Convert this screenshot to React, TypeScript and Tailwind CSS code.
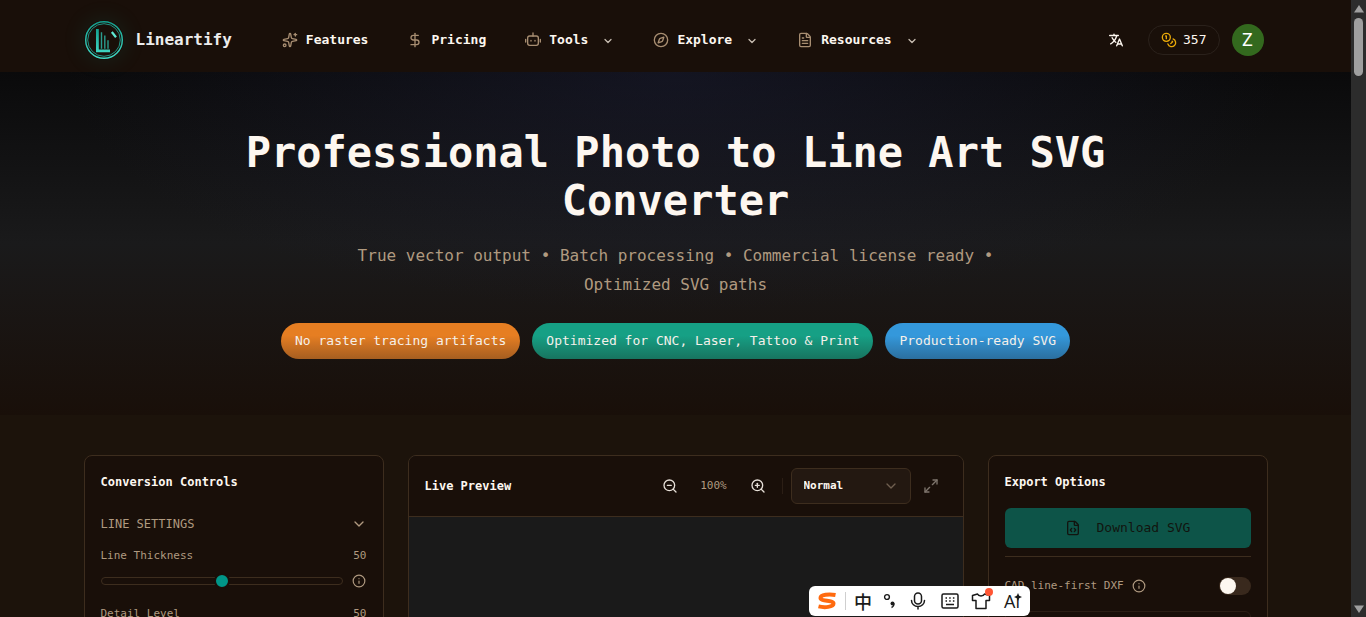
import type { ReactNode } from 'react';
import {
  ChevronDown,
  Coins,
  Compass,
  DollarSign,
  FileCode,
  FileText,
  Info,
  Maximize2,
  Sparkles,
  ZoomIn,
  ZoomOut,
} from 'lucide-react';
import { IoLanguage } from 'react-icons/io5';

function LogoMark() {
  return (
    <svg viewBox="0 0 40 40" className="size-10 rounded-full shadow-[0_0_24px_rgba(20,184,166,0.12)]" aria-hidden="true">
      <defs>
        <linearGradient id="logo" x1="0" y1="0" x2="0" y2="1">
          <stop offset="0" stopColor="#14a08f" />
          <stop offset="1" stopColor="#3fd6c2" />
        </linearGradient>
      </defs>
      <circle cx="20" cy="20" r="18.3" fill="none" stroke="url(#logo)" strokeWidth="1.5" />
      <circle cx="20" cy="20" r="16.3" fill="none" stroke="#1fa393" strokeWidth="0.9" />
      <path d="M12 9h2.8v20.400H26v2.800H12z" fill="url(#logo)" />
      <path d="M17.500 12.300v16.500M20.800 15.500v13.300M24 20.300v8.500" stroke="#2a9d8f" strokeWidth="1.400" />
      <path d="M27.800 12l4.200 5.300" stroke="#5eead4" strokeWidth="2.200" />
    </svg>
  );
}

function RobotIcon() {
  return (
    <svg viewBox="0 0 24 24" fill="none" stroke="currentColor" strokeWidth="2" strokeLinecap="round" strokeLinejoin="round" className="size-4" aria-hidden="true">
      <rect x="4" y="6" width="16" height="14" rx="3" />
      <path d="M12 6V1.500M1 11v4M23 11v4M9 12.500v1M15 12.500v1" />
    </svg>
  );
}

function NavItem({ icon, label, menu }: { icon: ReactNode; label: string; menu?: boolean }) {
  const content = (
    <>
      <span className="text-[#a88e72]">{icon}</span>
      {label}
      {menu && <ChevronDown className="mt-0.5 ml-1.5 size-3 text-[#c9beb2]" strokeWidth={2.5} />}
    </>
  );

  return menu ? (
    <button type="button" className="flex items-center gap-2">{content}</button>
  ) : (
    <a href="#" className="flex items-center gap-2">{content}</a>
  );
}

function Header() {
  return (
    <header className="bg-[#190f09]">
      <div className="mx-auto flex h-[72px] max-w-7xl items-center px-12 pt-2">
        <a href="#" className="flex items-center gap-3 text-base font-bold text-[#ececec]">
          <LogoMark />
          Lineartify
        </a>

        <nav className="ml-[50px] flex items-center gap-[39px] text-[13px] font-bold text-[#fdf7f0]">
          <NavItem icon={<Sparkles className="size-4" />} label="Features" />
          <NavItem icon={<DollarSign className="size-4" />} label="Pricing" />
          <NavItem icon={<RobotIcon />} label="Tools" menu />
          <NavItem icon={<Compass className="size-4" />} label="Explore" menu />
          <NavItem icon={<FileText className="size-4" />} label="Resources" menu />
        </nav>

        <div className="ml-auto flex items-center gap-3 pr-1 text-[#fdf7f0]">
          <button type="button" aria-label="Language" className="flex size-10 items-center justify-center">
            <IoLanguage className="size-4" />
          </button>
          <a href="#" className="flex h-[30px] items-center gap-1.5 rounded-full border border-[#2a211b] px-3 text-[13px]">
            <Coins className="size-4 text-[#eaa908]" />
            357
          </a>
          <button type="button" className="flex size-8 items-center justify-center rounded-full bg-[#33691e] font-[Roboto] text-lg text-white">
            Z
          </button>
        </div>
      </div>
    </header>
  );
}

function Hero() {
  return (
    <section className="bg-[radial-gradient(ellipse_45%_70%_at_50%_0%,rgba(34,36,66,0.4),transparent),linear-gradient(to_bottom,#0a0a0b,#1a1a1b_50%,#190f09)] px-12 pt-[57px] pb-14 text-center">
      <h1 className="mx-auto max-w-4xl text-[42px] leading-12 font-bold text-[#fdf7f0]">
        Professional Photo to Line Art SVG Converter
      </h1>
      <p className="mx-auto mt-4 max-w-2xl text-base leading-[29px] text-[#b09a80]">
        True vector output • Batch processing • Commercial license ready • Optimized SVG paths
      </p>
      <div className="mt-6 flex flex-wrap justify-center gap-3 text-[13px] leading-5 text-[#f5f0ea]">
        <span className="rounded-full bg-linear-to-b from-[#e67e22] from-35% to-[#a65e20] px-3.5 py-2">No raster tracing artifacts</span>
        <span className="rounded-full bg-linear-to-b from-[#16a085] from-35% to-[#17745f] px-3.5 py-2">Optimized for CNC, Laser, Tattoo &amp; Print</span>
        <span className="rounded-full bg-linear-to-b from-[#3498db] from-35% to-[#2b6f9f] px-3.5 py-2">Production-ready SVG</span>
      </div>
    </section>
  );
}

function SliderRow({ id, label }: { id: string; label: string }) {
  return (
    <div className="flex flex-col gap-2 text-[11px] leading-4">
      <div className="flex justify-between">
        <label htmlFor={id}>{label}</label>
        <span>50</span>
      </div>
      <div className="flex h-[18px] items-center gap-2">
        <input
          id={id}
          type="range"
          defaultValue={50}
          className="h-2 min-w-0 flex-1 appearance-none rounded-full border border-[#3d2d1e] bg-transparent [&::-webkit-slider-thumb]:size-4 [&::-webkit-slider-thumb]:appearance-none [&::-webkit-slider-thumb]:rounded-full [&::-webkit-slider-thumb]:border-2 [&::-webkit-slider-thumb]:border-[#190f09] [&::-webkit-slider-thumb]:bg-[#009688]"
        />
        <button type="button" aria-label={`About ${label}`} className="flex w-4 justify-center">
          <Info className="size-3.5" />
        </button>
      </div>
    </div>
  );
}

function Controls() {
  return (
    <section className="rounded-lg border border-[#3d2d1e] bg-[#190f09] p-4 text-[#b09a80]">
      <h2 className="text-xs leading-5 font-bold text-[#fdf7f0]">Conversion Controls</h2>
      <button type="button" className="mt-4 flex h-8 w-full items-center justify-between text-xs">
        LINE SETTINGS
        <ChevronDown className="size-4" />
      </button>
      <div className="mt-2 flex flex-col gap-4">
        <SliderRow id="thickness" label="Line Thickness" />
        <SliderRow id="detail" label="Detail Level" />
      </div>
    </section>
  );
}

function Preview() {
  return (
    <section className="overflow-hidden rounded-lg border border-[#3d2d1e] bg-[#1a1a1a]">
      <div className="flex items-center justify-between border-b border-[#3d2d1e] bg-[#190f09] px-4 py-3">
        <h2 className="text-xs font-bold text-[#fdf7f0]">Live Preview</h2>
        <div className="flex items-center gap-1 text-[11px] text-[#e6dfd7]">
          <button type="button" aria-label="Zoom out" className="flex size-8 items-center justify-center">
            <ZoomOut className="size-4" />
          </button>
          <span className="w-12 text-center text-[#b09a80]">100%</span>
          <button type="button" aria-label="Zoom in" className="flex size-8 items-center justify-center">
            <ZoomIn className="size-4" />
          </button>
          <span className="mx-1 h-4 w-px bg-[#2b1e15]" />
          <div className="relative">
            <select aria-label="Preview mode" className="h-9 w-[120px] appearance-none rounded-md border border-[#3d2d1e] bg-[#231811] px-3 font-bold text-[#fdf7f0]">
              <option>Normal</option>
            </select>
            <ChevronDown className="pointer-events-none absolute top-2.5 right-3 size-4 text-[#6f5f4f]" />
          </div>
          <button type="button" aria-label="Full screen" className="flex size-8 items-center justify-center text-[#7d746c]">
            <Maximize2 className="size-4" />
          </button>
        </div>
      </div>
      <div className="min-h-96" />
    </section>
  );
}

function ExportOptions() {
  return (
    <section className="rounded-lg border border-[#3d2d1e] bg-[#190f09] p-4 text-[#b09a80]">
      <h2 className="text-xs leading-5 font-bold text-[#fdf7f0]">Export Options</h2>
      <button type="button" className="mt-4 flex h-10 w-full items-center justify-center gap-4 rounded-md bg-[#0d5448] text-[13px] text-[#12140f]">
        <FileCode className="size-4" />
        Download SVG
      </button>
      <div className="mt-2 flex items-center justify-between border-t border-[#3d2d1e] pt-5 pb-4 text-[11px]">
        <div className="flex items-center gap-2">
          <label htmlFor="dxf">CAD line-first DXF</label>
          <Info className="size-3.5" />
        </div>
        <input
          id="dxf"
          type="checkbox"
          role="switch"
          className="flex h-[18px] w-8 appearance-none items-center rounded-full bg-[#39291d] px-px before:size-4 before:rounded-full before:bg-[#fdf7f0] before:content-['']"
        />
      </div>
      <div className="h-24 rounded-md border border-[#2b1e15]" />
    </section>
  );
}

function InputBar() {
  return (
    <div className="absolute bottom-px left-[809px] grid h-[30px] w-[221px] grid-cols-[36px_1px_34px_20px_36px_28px_34px_28px] items-center justify-items-center rounded-md bg-white text-[#1a1a1a]">
      <svg viewBox="0 0 20 18" className="h-[18px] w-5" fill="none" aria-hidden="true">
        <path d="M18.500 3C12 1.800 3.500 2.600 3.500 6c0 3.600 13 2 13 5.600 0 3.600-9 4.200-15 2.800" stroke="#ff6a0f" strokeWidth="4" />
      </svg>
      <span className="h-[18px] w-px bg-[#cfcfcf]" />
      <span className="font-['Noto_Sans_CJK_SC',sans-serif] text-lg leading-5 font-medium">中</span>
      <svg viewBox="0 0 14 16" className="h-4 w-3.5" aria-hidden="true">
        <circle cx="4" cy="4" r="2.400" fill="none" stroke="currentColor" strokeWidth="1.400" />
        <circle cx="9.500" cy="10.500" r="2" fill="currentColor" />
        <path d="M11 10.500c0 2-1 3.300-2.500 4" fill="none" stroke="currentColor" strokeWidth="1.400" />
      </svg>
      <svg viewBox="0 0 16 18" className="h-[18px] w-4" fill="none" stroke="currentColor" strokeWidth="1.500" strokeLinecap="round" aria-hidden="true">
        <rect x="4.500" y="1" width="7" height="11" rx="3.500" />
        <path d="M1.500 8.500a6.500 6 0 0 0 13 0M8 14.500V17" />
      </svg>
      <svg viewBox="0 0 18 16" className="h-4 w-[18px]" fill="none" stroke="currentColor" strokeWidth="1.500" aria-hidden="true">
        <rect x="1" y="1" width="16" height="14" rx="1.500" />
        <path d="M4.500 5h9M4.500 8h9" strokeDasharray="1.500 2.200" />
        <path d="M5 11.500h8" />
      </svg>
      <span className="relative">
        <svg viewBox="0 0 20 18" className="h-[18px] w-5" fill="none" stroke="currentColor" strokeWidth="1.500" strokeLinejoin="round" aria-hidden="true">
          <path d="M6.500 2L1.500 3.500v5H5v8h10v-8h3.500v-5l-5-1.500c-1 2.500-6 2.500-7 0z" />
        </svg>
        <span className="absolute -top-1 -right-0.5 size-2 rounded-full bg-[#ff5533]" />
      </span>
      <span className="relative font-['Open_Sans',sans-serif] text-lg leading-6">
        Ai
        <svg viewBox="0 0 8 8" className="absolute top-1 -right-0.5 size-2" fill="currentColor" aria-hidden="true">
          <path d="M4 0l1.200 2.800L8 4 5.200 5.200 4 8 2.800 5.200 0 4l2.800-1.200z" />
        </svg>
      </span>
    </div>
  );
}

function ScrollRail() {
  return (
    <div className="flex w-[15px] shrink-0 flex-col items-center bg-[#2c2c2c] py-1 text-[#9f9f9f]" aria-hidden="true">
      <svg viewBox="0 0 10 8" className="mt-px h-2 w-2.5" fill="currentColor">
        <path d="M5 0l5 7.500H0z" />
      </svg>
      <span className="mt-[5px] h-[58px] w-[9px] rounded-full bg-[#9f9f9f]" />
      <svg viewBox="0 0 10 8" className="mt-auto h-2 w-2.5" fill="currentColor">
        <path d="M5 8L0 .5h10z" />
      </svg>
    </div>
  );
}

export default function App() {
  return (
    <div className="relative flex h-screen overflow-hidden bg-[#1c130b] font-['DejaVu_Sans_Mono',monospace]">
      <div className="min-w-0 flex-1">
        <Header />
        <main>
          <Hero />
          <div className="mx-auto grid max-w-7xl grid-cols-[300px_1fr_280px] gap-6 px-12 pt-10">
            <Controls />
            <Preview />
            <ExportOptions />
          </div>
        </main>
      </div>
      <ScrollRail />
      <InputBar />
    </div>
  );
}
